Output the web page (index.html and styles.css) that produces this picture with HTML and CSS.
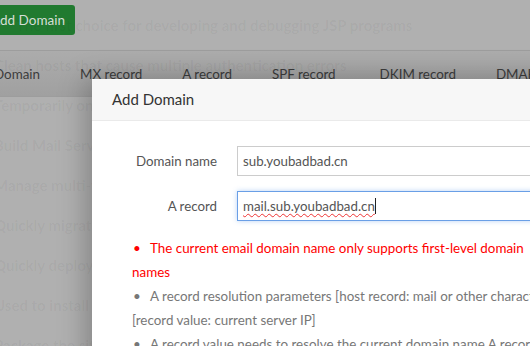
FILE: index.html
```html
<!DOCTYPE html>
<html lang="en">
    <head>
        <meta charset="UTF-8" />
        <title>Mail Server - Add Domain</title>
        <link rel="stylesheet" href="styles.css">
    </head>
    <body>
        <div class="page">
            <div class="toolbar">
                <button class="btn-add">Add Domain</button>
                <div class="tabs">
                    <span>Domain</span>
                    <span>MX record</span>
                    <span>A record</span>
                    <span>SPF record</span>
                    <span>DKIM record</span>
                    <span>DMARC record</span>
                </div>
            </div>

            <!-- leftover frame of the software list, fading out -->
            <ul class="ghost">
                <li class="first">The first choice for developing and debugging JSP programs</li>
                <li>Clean hosts that cause multiple authentication errors</li>
                <li>Temporarily only used for testing</li>
                <li>Build Mail Server</li>
                <li>Manage multi-version</li>
                <li>Quickly migrate</li>
                <li>Quickly deploy</li>
                <li>Used to install a</li>
                <li>Package the site</li>
            </ul>
        </div>

        <div class="modal">
            <div class="modal-head">Add Domain</div>
            <div class="modal-body">
                <div class="row">
                    <label>Domain name</label>
                    <div class="field">sub.youbadbad.cn</div>
                </div>
                <div class="row">
                    <label>A record</label>
                    <div class="field focus"><span class="typo">mail.sub.youbadbad.cn</span><span class="caret"></span></div>
                </div>

                <ul class="tips">
                    <li class="warn">The current email domain name only supports first-level domain names</li>
                    <li>A record resolution parameters [host record: mail or other characters] [record value: current server IP]</li>
                    <li>A record value needs to resolve the current domain name A record to the server</li>
                </ul>
            </div>
        </div>
    </body>
</html>
```

FILE: styles.css
```css
html, body {
    margin: 0;
    height: 100%;
    overflow: hidden;
}
body {
    background: #b0b0b0;
    font-family: Lato, "Open Sans", Arial, sans-serif;
    color: #333;
    position: relative;
}
.page {
    position: relative;
}
.toolbar {
    padding-top: 5px;
}
.btn-add {
    display: block;
    margin-left: -23px;
    height: 30px;
    padding: 0 10px 0 14px;
    border: none;
    border-radius: 3px;
    background: #217a30;
    color: #d6dfd7;
    font-family: inherit;
    font-size: 13.5px;
}
.tabs {
    margin-top: 15px;
    height: 45px;
    border-top: 1px solid #9d9d9d;
    border-bottom: 1px solid #9d9d9d;
    background: linear-gradient(#acacac, #a0a0a0);
    display: flex;
    align-items: center;
    margin-left: -26px;
    white-space: nowrap;
}
.tabs span {
    padding: 0 20px;
    font-size: 13.4px;
    color: #3c3c3c;
}
.tabs span:nth-child(5) {
    padding-left: 24px;
}
.ghost {
    position: absolute;
    top: 0;
    left: -6px;
    list-style: none;
    margin: 0;
    padding: 13px 0 0 0;
}
.ghost li {
    height: 40px;
    line-height: 24px;
    font-size: 15px;
    font-weight: bold;
    color: rgba(0, 0, 0, 0.045);
    white-space: nowrap;
}
.ghost li.first {
    padding-left: 22px;
}
.modal {
    position: absolute;
    left: 92px;
    top: 79px;
    width: 620px;
    height: 400px;
    background: #fff;
    box-shadow: -6px 0 26px rgba(0, 0, 0, 0.25);
}
.modal-head {
    height: 41px;
    line-height: 41px;
    padding-left: 20px;
    background: #f7f7f7;
    border-bottom: 1px solid #eaeaea;
    font-size: 15px;
    color: #333;
}
.modal-body {
    padding: 25px 0 0 0;
}
.row {
    display: flex;
    align-items: center;
    margin-bottom: 15px;
}
.row label {
    width: 125px;
    text-align: right;
    font-size: 13.3px;
    color: #555;
}
.field {
    margin-left: 20px;
    flex: 1;
    height: 28px;
    line-height: 28px;
    border: 1px solid #ccc;
    padding-left: 5px;
    font-size: 13.3px;
    color: #555;
}
.field.focus {
    border-color: #6a9fe6;
    box-shadow: 0 0 5px rgba(102, 160, 235, 0.45);
}
.typo {
    text-decoration: underline wavy #e33;
    text-decoration-thickness: 1px;
    text-underline-offset: 2px;
}
.caret {
    display: inline-block;
    width: 1px;
    height: 16px;
    background: #222;
    vertical-align: -3px;
}
.tips {
    list-style: none;
    margin: 0;
    padding: 0 0 0 40px;
    width: 428px;
    font-size: 13.4px;
    line-height: 24px;
    color: #777;
}
.tips li::before {
    content: "\2022";
    display: inline-block;
    width: 17px;
    padding-left: 1px;
}
.tips li.warn {
    color: #f00;
}
```
